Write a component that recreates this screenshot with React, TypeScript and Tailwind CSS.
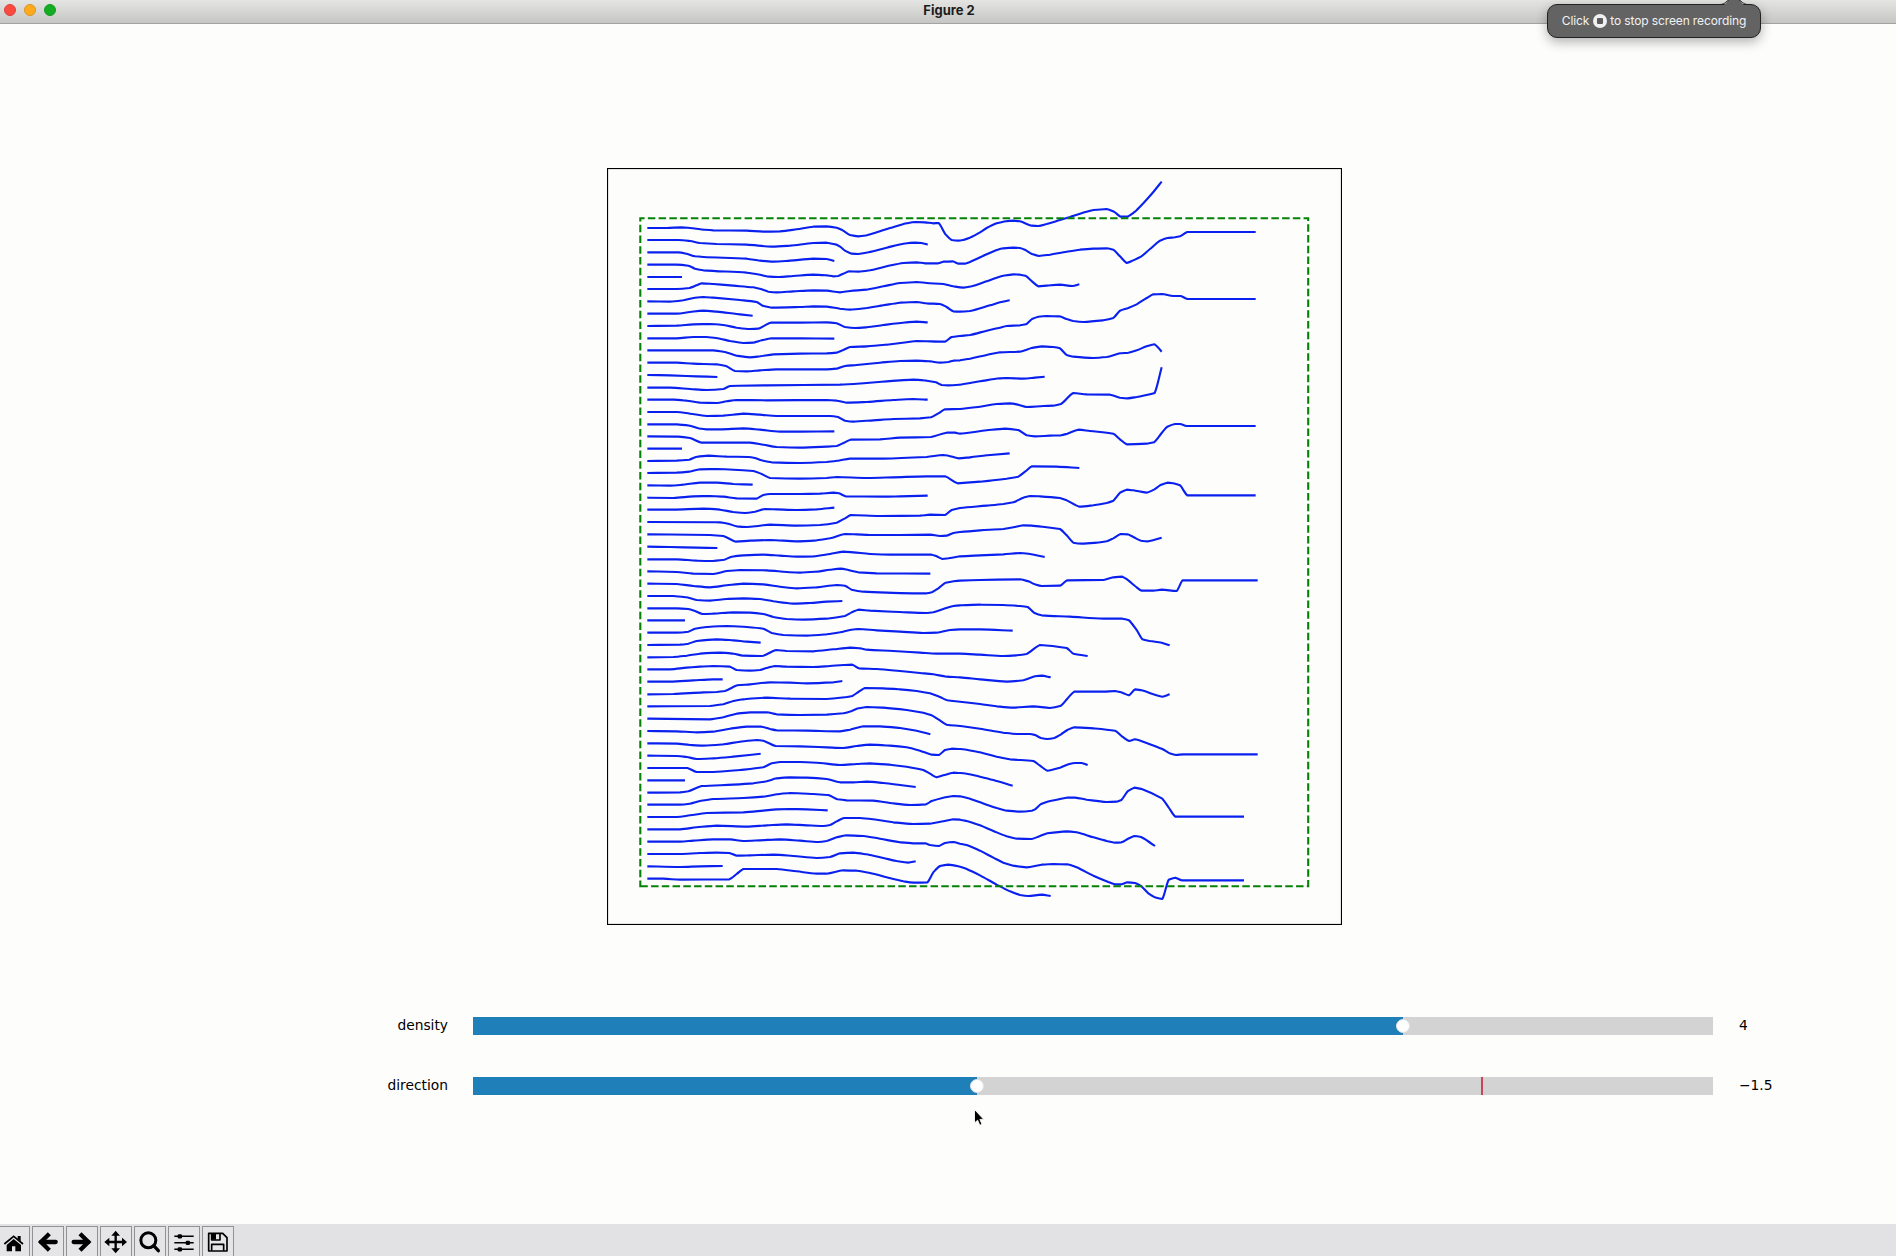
import React from "react";

type Streamline = { dy: number; left: string; right?: string };

// Horizontal distance between the two halves of the plot, in plot units (1/3 px).
const HALF = 1080;

const streamlines: Streamline[] = [
  { dy: 0, left: "142,204 200,204 245,202 270,204 310,209 340,211 440,212 490,215 540,214 590,208 640,200 680,199 710,203 728,211 750,225 775,229 800,226 830,217 870,204 920,190 945,186 975,187 1000,190 1016,189 1035,221 1055,240 1075,242", right: "10,240 30,233 60,217 80,204 110,190 130,185 160,182 180,184 215,197 235,198 260,192 300,180 330,171 360,161 400,150 440,147 462,155 482,170 502,170 525,155 550,130 580,96 605,65" },
  { dy: 0, left: "142,240 235,240 270,243 300,249 350,252 440,254 515,260 570,257 640,249 680,248 710,254 722,261 735,272 755,281 775,282 805,277 860,263 910,251 945,248 965,249 983,254" },
  { dy: 0, left: "142,277 235,277 260,281 285,289 310,291 440,296 480,302 520,305 570,302 640,296 680,297 703,303" },
  { dy: 0, left: "142,314 230,314 265,317 285,326 310,331 440,338 480,344 500,349 535,351 580,348 640,344 680,346 700,349 714,348 730,341 748,334 775,335 810,331 860,319 910,309 950,307 975,310 1015,310 1030,305 1058,304 1075,311 1095,311", right: "30,306 80,283 110,270 130,265 160,263 180,264 198,271 216,282 237,288 270,284 310,277 360,269 400,266 440,265 460,269 480,289 500,309 520,301 543,290 570,267 600,242 622,234 645,232 660,229 682,216 887,216" },
  { dy: 0, left: "142,351 246,351" },
  { dy: 0, left: "142,387 230,387 268,384 290,376 305,370 340,372 400,377 460,382 485,388 505,395 530,397 580,394 640,391 680,392 720,397 750,393 800,389 850,379 900,369 950,366 980,369 1030,372 1060,379 1090,383", right: "35,379 80,364 110,353 130,347 160,343 180,344 196,347 216,364 235,379 260,377 300,374 337,378 358,373" },
  { dy: 0, left: "142,424 210,425 250,421 285,413 310,411 340,413 420,420 470,426 490,438 515,443 600,441 640,439 680,440 720,446 750,449 800,444 850,436 900,428 950,426 980,430 1020,432 1040,441 1060,454 1080,455", right: "30,453 90,436 120,427 149,421" },
  { dy: 0, left: "142,461 230,461 270,456 310,452 350,455 410,462 458,467" },
  { dy: 0, left: "142,498 230,497 280,493 330,492 370,495 410,503 450,507 475,506 495,496 512,488 600,488 680,487 710,490 735,501 765,504 800,502 850,495 920,487 950,485 983,487" },
  { dy: 0, left: "142,535 230,535 280,531 320,531 360,536 390,543 430,549 460,548 485,541 515,535 600,535 703,536" },
  { dy: 0, left: "142,571 340,571 375,576 410,587 450,592 480,589 520,583 600,581 680,580 710,578 728,571 750,561 800,559 860,554 920,547 950,543 1035,545 1055,531 1080,528", right: "30,525 80,512 120,503 140,498 180,496 198,493 216,477 235,470 260,468 298,469 320,477 340,483 370,486 430,481 460,474 480,452 505,444 530,433 560,414 580,403 605,402 640,408 662,408 682,417 887,417" },
  { dy: 0, left: "142,608 230,608 280,611 350,613 378,618 405,633 440,634 480,631 530,628 680,628 710,626 735,618 770,615 840,608 900,603 950,602 990,604 1020,608 1045,606 1060,602 1080,601", right: "30,596 80,585 120,577 180,575 215,564 245,559 280,561 300,565 320,585 340,590 400,594 440,591 480,580 505,578 530,571 560,559 584,553 605,575" },
  { dy: 0, left: "142,645 210,646 290,649 352,651" },
  { dy: 0, left: "142,683 210,683 270,687 320,690 370,687 390,678 500,676 720,674 800,669 860,664 900,661 940,659 980,662 1008,667 1025,675 1045,676 1080,674", right: "60,664 120,655 140,654 190,656 225,653 254,650" },
  { dy: 0, left: "142,719 220,719 260,722 300,728 350,729 380,724 410,720 500,721 680,720 710,722 740,728 800,726 880,720 940,717 983,719" },
  { dy: 720, left: "142,36 230,36 270,41 320,48 370,47 430,41 480,44 530,48 690,48 714,51 735,62 760,65 820,61 880,57 960,55 993,52 1015,40 1035,28 1080,27", right: "60,20 110,12 150,10 175,14 200,21 250,18 280,17 303,12 340,-21 380,-17 450,-16 480,-7 503,-5 530,-9 584,-21 605,-98" },
  { dy: 720, left: "142,73 230,73 270,77 295,85 320,88 360,88 430,85 480,89 540,95 600,95 703,94" },
  { dy: 720, left: "142,109 235,110 270,114 305,128 450,128 490,134 530,141 600,143 680,140 710,138 732,128 752,119 840,118 900,113 993,111 1040,98 1065,98 1080,101", right: "20,99 80,91 135,86 175,90 200,106 225,109 270,107 303,106 322,101 355,89 390,93 460,101 480,118 500,133 560,131 582,127 605,99 622,80 645,72 660,72 680,78 887,78" },
  { dy: 720, left: "142,146 246,146" },
  { dy: 720, left: "142,183 230,182 268,179 288,171 325,167 380,170 445,171 465,174 485,181 515,187 600,189 680,186 715,182 750,176 850,176 980,171 1030,165 1045,167 1075,175", right: "30,172 80,166 149,160" },
  { dy: 720, left: "142,219 230,218 268,215 300,208 350,207 460,213 485,222 510,234 600,236 680,234 710,231 800,234 880,232 980,229 1035,229 1073,250", right: "20,248 60,245 100,241 140,236 175,230 195,215 216,199 290,200 358,204" },
  { dy: 720, left: "142,256 210,257 250,254 300,248 350,248 400,252 458,254" },
  { dy: 720, left: "142,293 220,294 280,289 330,288 370,290 410,295 470,296 490,285 510,282 600,282 660,281 700,278 717,280 737,289 850,290 900,289 983,287" },
  { dy: 720, left: "142,329 220,329 310,326 360,329 400,336 435,339 465,335 495,327 530,328 590,330 650,328 703,323" },
  { dy: 720, left: "142,366 360,367 385,371 410,379 440,381 480,377 510,374 590,377 660,375 710,368 735,355 752,345 840,348 960,347 990,344 1035,345 1055,330 1080,324", right: "80,317 130,312 160,307 190,293 210,288 240,289 300,294 320,301 358,320 400,316 440,309 460,302 480,278 500,269 520,271 560,278 582,269 600,256 622,248 640,250 660,256 682,286 887,286" },
  { dy: 720, left: "142,403 330,405 370,408 408,425 450,422 510,420 590,424 650,421 690,415 735,402 770,403 810,405 900,405 990,404 1020,408 1040,407 1060,399 1080,396", right: "60,391 130,387 160,382 190,376 215,377 260,382 300,387 320,406 340,428 365,431 410,428 440,424 460,415 482,402 503,403 520,411 543,422 565,424 605,413" },
  { dy: 720, left: "142,440 210,441 290,443 352,444" },
  { dy: 720, left: "142,478 230,478 290,482 330,483 373,479 395,470 430,466 490,464 540,467 590,470 640,469 690,462 730,455 760,457 810,462 870,464 995,464 1010,469 1027,477 1045,475 1080,469", right: "60,466 130,463 180,459 210,462 254,471" },
  { dy: 720, left: "142,514 230,516 280,521 340,522 380,513 420,510 500,511 560,516 600,518 650,515 690,509 722,506 745,510 775,517 830,520 991,521" },
  { dy: 720, left: "142,551 230,552 280,558 330,562 380,556 430,551 490,553 540,560 590,565 650,562 710,555 735,557 755,569 790,575 860,578 950,580 980,580 997,576 1015,565 1037,548 1060,544 1080,542", right: "60,540 180,538 205,544 225,553 245,558 300,557 322,541 430,540 460,532 487,530 505,541 525,558 545,572 580,572 605,569 650,573 668,541 893,541" },
  { dy: 720, left: "142,588 220,588 260,592 290,600 330,602 380,597 430,595 480,597 520,604 580,611 630,609 680,605 727,603" },
  { dy: 720, left: "142,625 230,625 265,627 285,633 307,642 340,641 400,637 450,638 490,642 520,651 560,657 610,659 680,656 735,648 755,637 775,629 810,632 900,636 980,639 1000,637 1030,627 1060,618 1080,616", right: "60,614 130,615 180,618 203,621 222,638 245,646 330,650 430,656 487,656 507,661 530,690 547,718 570,723 605,728 629,736" },
  { dy: 720, left: "142,661 255,661" },
  { dy: 720, left: "142,698 230,698 265,695 285,686 320,681 380,678 440,681 490,686 515,699 550,705 620,707 680,703 720,697 750,690 775,687 830,691 900,695 970,699 1010,698 1050,690 1080,688", right: "60,688 158,692" },
  { dy: 720, left: "142,735 240,734 265,731 290,723 350,718 400,721 440,725 482,728" },
  { dy: 1470, left: "142,22 220,21 260,17 300,11 360,8 400,11 430,17 480,18 490,17 528,0 560,3 640,4 700,-2 750,-7 780,-5 800,-1 880,3 960,8 1010,11 1080,11", right: "60,14 130,18 170,16 200,12 240,-15 320,-6 340,11 383,18" },
  { dy: 1470, left: "142,58 210,58 260,53 300,50 340,48 390,50 410,60 450,62 480,60 500,54 525,48 560,50 640,51 690,48 730,45 757,44 777,55 830,57 900,63 960,69 1000,73 1040,80 1080,82", right: "60,88 140,95 190,91 225,79 245,77 272,82" },
  { dy: 1470, left: "142,95 210,95 280,91 340,88 368,88" },
  { dy: 1470, left: "142,133 220,132 310,127 350,126 375,123 412,106 450,103 510,97 570,98 620,100 700,97 727,93" },
  { dy: 1470, left: "142,169 330,168 370,163 400,153 430,148 500,143 570,146 680,147 740,141 757,138 775,126 795,114 850,115 900,118 950,123 990,130 1020,141 1042,151 1080,155", right: "60,162 110,169 160,173 220,169 270,174 303,167 322,146 343,125 430,125 465,123 487,128 507,136 525,118 545,121 607,140 629,133" },
  { dy: 1470, left: "142,206 330,208 370,202 410,191 450,187 500,187 530,193 600,195 680,194 730,190 755,183 775,175 800,171 850,173 920,180 970,188 995,196 1015,208 1040,224 1080,228", right: "60,236 130,248 170,252 210,252 225,255 243,264 262,267 283,264 303,253 322,240 343,232 400,235 465,242 487,260 507,273 525,268 560,279 607,297 629,310 648,315 670,313 893,313" },
  { dy: 1470, left: "142,243 230,244 290,247 340,245 390,236 440,230 485,230 510,237 530,241 620,242 720,244 750,239 790,229 840,229 900,234 950,242 991,253" },
  { dy: 1470, left: "142,280 230,281 270,285 310,287 370,283 420,275 470,270 490,272 527,288 600,289 680,292 730,294 770,288 810,284 870,287 920,292 960,302 995,314 1017,315 1035,300 1055,296 1080,297", right: "20,299 60,307 110,320 150,328 220,333 240,347 262,362 300,353 325,343 345,339 365,339 383,345" },
  { dy: 1470, left: "142,317 230,318 260,321 290,327 340,325 400,320 482,311" },
  { dy: 1470, left: "142,354 262,354 290,366 340,366 420,360 490,352 515,340 540,336 600,336 660,339 720,345 770,342 810,340 870,344 920,350 970,360 990,371 1010,382 1030,376 1060,368 1080,369", right: "20,371 60,380 100,390 158,407" },
  { dy: 1470, left: "142,391 255,391" },
  { dy: 1470, left: "142,428 240,427 265,424 305,408 400,404 460,400 500,394 530,385 570,382 620,383 680,387 720,397 760,397 800,395 850,399 900,405 947,411" },
  { dy: 1470, left: "142,464 240,464 270,461 300,453 340,447 430,444 490,440 530,433 570,429 640,432 685,435 712,448 740,451 820,452 870,459 930,465 978,463 995,453 1030,443 1060,438 1080,439", right: "30,446 80,464 110,474 140,482 180,485 215,482 225,478 243,462 262,455 290,449 320,443 345,443 380,449 440,456 470,455 484,450 503,424 523,413 545,417 607,446 627,474 646,500 852,500" },
  { dy: 1470, left: "142,501 230,501 270,496 320,489 430,487 490,482 530,478 570,477 620,478 683,481" },
  { dy: 1470, left: "142,538 240,538 290,532 350,527 440,530 500,526 560,523 620,526 670,528 690,525 710,514 732,504 780,504 830,509 880,517 940,522 990,521 1030,514 1060,508 1080,509", right: "20,513 60,526 100,543 140,559 170,566 215,567 240,558 262,550 320,544 350,547 400,562 440,573 465,578 484,577 503,567 523,558 543,561 563,573 585,588" },
  { dy: 1470, left: "142,575 240,575 280,572 340,568 390,568 430,573 480,571 540,568 600,572 655,576 680,573 710,562 740,556 790,558 840,566 900,577 940,580 975,580 990,585 1017,588 1035,579 1060,576 1080,581", right: "20,585 60,602 100,623 130,638 160,647 200,652 245,644 280,642 322,643 350,652 400,677 445,696 465,703 484,703 503,697 525,699 543,708 565,730 585,742 607,747 626,689 646,683 665,691 852,691" },
  { dy: 1470, left: "142,612 240,612 300,609 350,608 388,609 410,617 450,616 520,614 580,618 650,624 690,621 720,610 760,608 800,613 850,624 890,633 925,638 947,634" },
  { dy: 1470, left: "142,649 240,651 300,649 368,648" },
  { dy: 1470, left: "142,686 190,686 240,689 388,688 410,672 430,657 530,657 590,664 650,671 680,671 730,661 770,662 820,671 860,682 910,694 940,698 982,697 1000,667 1020,648 1045,644 1080,650", right: "20,657 60,676 110,704 150,724 180,735 205,738 245,734 272,738" },
];

const parse = (s: string | undefined, dx: number, dy: number) =>
  (s ? s.split(" ") : []).map((p) => {
    const [x, y] = p.split(",").map(Number);
    return [(x + dx) / 3, (y + dy) / 3];
  });

// Monotone cubic through the points, relaxed halfway towards straight segments.
function toPath({ dy, left, right }: Streamline): string {
  const p = [...parse(left, 0, dy), ...parse(right, HALF, dy)];
  const n = p.length;
  const slope = p.slice(1).map((q, i) => (q[1] - p[i][1]) / (q[0] - p[i][0]));
  const m = p.map((_, i) => {
    if (i === 0) return slope[0];
    if (i === n - 1) return slope[n - 2];
    const a = slope[i - 1];
    const b = slope[i];
    return a * b <= 0 ? 0 : (2 * a * b) / (a + b);
  });
  let d = `M${p[0][0].toFixed(2)} ${p[0][1].toFixed(2)}`;
  for (let i = 1; i < n; i++) {
    const h = (p[i][0] - p[i - 1][0]) / 3;
    const a = (m[i - 1] + slope[i - 1]) / 2;
    const b = (m[i] + slope[i - 1]) / 2;
    d += `C${[p[i - 1][0] + h, p[i - 1][1] + a * h, p[i][0] - h, p[i][1] - b * h, p[i][0], p[i][1]]
      .map((v) => v.toFixed(2))
      .join(" ")}`;
  }
  return d;
}

function Plot() {
  return (
    <svg className="block h-[757px] w-[735px]" viewBox="7 8 735 757" fill="none">
      <rect x="7.5" y="8.5" width="734" height="756" stroke="#000" strokeWidth="1.2" />
      <g stroke="#0a20ee" strokeWidth="2.1" strokeLinejoin="round">
        {streamlines.map((s, i) => (
          <path key={i} d={toPath(s)} />
        ))}
      </g>
      <path d="M40.3 726.2H708.2V58.2H40.3Z" stroke="#058205" strokeWidth="2.1" strokeDasharray="7.5 3.25" />
    </svg>
  );
}

function SliderRow({ label, value, fill, mark }: { label: string; value: string; fill: number; mark?: number }) {
  return (
    <div className="flex h-[18px] items-start">
      <div className="-mt-px w-[448px] text-right">{label}</div>
      <div className="relative ml-[25px] h-[18px] w-[1240px] bg-[#d3d3d3]">
        <div className="h-full bg-[#1f7fb9]" style={{ width: fill }} />
        {mark !== undefined && <div className="absolute top-0 h-full w-[1.5px] bg-[#c94458]" style={{ left: mark }} />}
        <div
          className="absolute top-[2px] size-[14px] -translate-x-1/2 rounded-full border border-[#e2e2e2] bg-white"
          style={{ left: fill }}
        />
      </div>
      <div className="-mt-px ml-[26px]">{value}</div>
    </div>
  );
}

const icons: React.ReactNode[] = [
  <g key="home">
    <path d="M14 88L42 65L70 88" fill="none" stroke="#000" strokeWidth="5" />
    <path d="M54 64H63V80L54 73Z" />
    <path d="M42 73L64 91V110H47V95H37V110H21V91Z" />
  </g>,
  <g key="back" fill="none" stroke="#000" strokeWidth="13">
    <path d="M149 57L124 82L149 107" />
    <path d="M124 82H168" strokeLinecap="round" />
  </g>,
  <g key="forward" fill="none" stroke="#000" strokeWidth="13">
    <path d="M241 57L266 82L241 107" />
    <path d="M266 82H222" strokeLinecap="round" />
  </g>,
  <g key="pan">
    <path d="M348 56V108M322 82H374" stroke="#000" strokeWidth="7" />
    <path d="M348 48L361 63H335ZM348 116L361 101H335ZM314 82L329 69V95ZM382 82L367 69V95Z" />
  </g>,
  <g key="zoom" fill="none" stroke="#000" strokeWidth="9">
    <circle cx="446" cy="77" r="22.500" />
    <path d="M462 93L476 108" strokeWidth="10" strokeLinecap="round" />
  </g>,
  <g key="configure">
    <path d="M524 65H582M524 84.500H582M524 104H582" stroke="#000" strokeWidth="4.500" />
    <rect x="534" y="58.500" width="13" height="13" rx="4" />
    <rect x="558" y="78" width="13" height="13" rx="4" />
    <rect x="534" y="97.500" width="13" height="13" rx="4" />
  </g>,
  <g key="save" fill="none" stroke="#000" strokeWidth="5" strokeLinejoin="round">
    <path d="M627 56H669L682 69V109H627Z" />
    <path d="M636 108V89H672V108" />
    <path d="M636 57V76H661V57" />
    <path d="M637 57H649V75H637Z" fill="#000" stroke="none" />
  </g>,
];

function Toolbar() {
  return (
    <div className="flex h-[32px] gap-[3px] overflow-hidden bg-[#e2e2e4] pt-[2px]">
      {icons.map((icon, i) => (
        <button
          key={i}
          className="-ml-px flex h-[40px] w-[32px] shrink-0 items-start border border-[#929295] bg-[#e5e5e7] first:-ml-[2px]"
        >
          <svg className="h-[30px] w-[30px] shrink-0" viewBox={`${-2 + i * 102} 37 90 90`}>
            {icon}
          </svg>
        </button>
      ))}
    </div>
  );
}

export default function App() {
  return (
    <div className="relative flex h-[1256px] w-[1896px] flex-col overflow-hidden bg-[#fdfdfc] text-black">
      <header className="grid h-[24px] shrink-0 grid-cols-[1fr_auto_1fr] items-start border-b border-[#a3a3a3] bg-gradient-to-b from-[#e4e4e3] to-[#c6c6c5]">
        <div className="flex gap-[8px] pt-[4px] pl-[4px]">
          <span className="size-[12px] rounded-full border border-[#dc4238] bg-[#fb4a40]" />
          <span className="size-[12px] rounded-full border border-[#dd9421] bg-[#fdaa1d]" />
          <span className="size-[12px] rounded-full border border-[#159a25] bg-[#13ad24]" />
        </div>
        <h1 className="pt-[1px] pl-[2px] font-[Inter,sans-serif] text-[13px] leading-[18px] font-bold text-[#1c1c1c]">Figure 2</h1>
      </header>

      <main className="flex grow flex-col">
        <div className="pt-[144px] pl-[607px]">
          <Plot />
        </div>
        <div className="flex flex-col gap-[42px] pt-[92px] font-['DejaVu_Sans',sans-serif] text-[13.8px] leading-[18px]">
          <SliderRow label="density" value="4" fill={930} />
          <SliderRow label="direction" value="−1.5" fill={504} mark={1008} />
        </div>
      </main>

      <Toolbar />

      <div className="absolute top-[4px] left-[1547px] flex h-[34px] w-[214px] items-center justify-center gap-[3.500px] rounded-[10px] border border-[#222] bg-[#636363] font-[Inter,sans-serif] text-[12px] tracking-[-0.01em] whitespace-nowrap text-[#f2f2f2] shadow-[0_4px_12px_rgba(0,0,0,0.3)]">
        <svg className="absolute top-[-5px] left-[172px] h-[6px] w-[28px]" viewBox="0 0 28 6">
          <path d="M0 6C5 6 6 2 9 0H19C22 2 23 6 28 6Z" fill="#636363" />
          <path d="M0 4.500C5 4.500 6 1 9 0M19 0C22 1 23 4.500 28 4.500" fill="none" stroke="#222" />
        </svg>
        <span>Click</span>
        <span className="flex size-[14px] items-center justify-center rounded-full bg-[#f0f0f0]">
          <span className="size-[6px] rounded-[1px] bg-[#5c5c5c]" />
        </span>
        <span>to stop screen recording</span>
      </div>

      <svg className="absolute top-[1108px] left-[973px] h-[20px] w-[14px]" viewBox="0 0 14 20">
        <path d="M1.500 1.500V15L4.600 12.200L6.800 17.300L9 16.300L6.900 11.400H10.800Z" fill="#000" stroke="#fff" strokeWidth="0.900" />
      </svg>
    </div>
  );
}
